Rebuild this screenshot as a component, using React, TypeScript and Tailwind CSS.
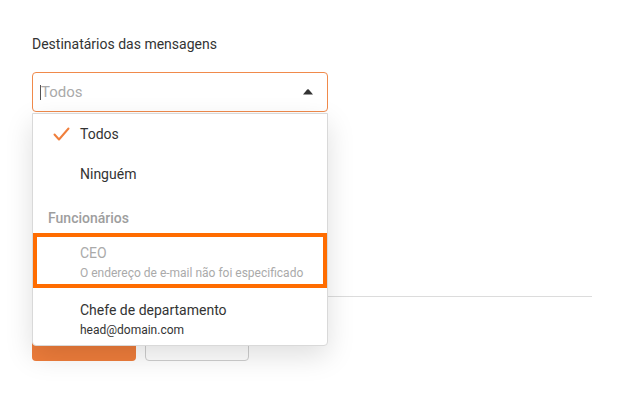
export default function App() {
  return (
    <div className="w-[624px] h-[393px] bg-white pt-[34px] px-8 font-['Roboto',sans-serif] overflow-hidden">
      <div className="text-[14px] leading-5 text-[#333]">Destinatários das mensagens</div>

      <div className="relative mt-[18px] w-[296px]">
        <div className="h-10 flex items-center border border-[#f08a4b] rounded-[4px] pl-[7px] pr-[14px]">
          <span className="w-px h-[15px] bg-[#555]" />
          <span className="flex-1 text-[15px] text-[#aaa]">Todos</span>
          <svg width="10" height="6" viewBox="0 0 10 6">
            <path d="M0 5.5 L4.2 0.6 Q5 -0.2 5.8 0.6 L10 5.5 Z" fill="#333" />
          </svg>
        </div>

        <div className="absolute left-0 top-full mt-px w-[296px] bg-white border border-[#d9d9d9] rounded-b-[4px] shadow-[0_10px_28px_rgba(0,0,0,0.13)] z-10">
          <div className="h-10 flex items-center text-[14px] text-[#333]">
            <span className="w-[47px] flex justify-end pr-[10px]">
              <svg width="17" height="14" viewBox="0 0 17 14" fill="none">
                <polyline points="1.5,7.5 6,12.5 15.5,1.5" stroke="#f07f3c" strokeWidth="2" strokeLinecap="round" strokeLinejoin="round" />
              </svg>
            </span>
            Todos
          </div>
          <div className="h-10 flex items-center pl-[47px] text-[14px] text-[#333]">Ninguém</div>
          <div className="h-[39px] pt-[14px] pl-[15px] text-[14px] leading-5 font-medium text-[#9e9e9e]">Funcionários</div>
          <div className="h-[55px] border-4 border-[#ff6c00] pl-[43px] pt-[6px]">
            <div className="text-[14px] leading-5 text-[#aaa]">CEO</div>
            <div className="mt-[2px] text-[12px] leading-4 text-[#aaa]">O endereço de e-mail não foi especificado</div>
          </div>
          <div className="pl-[47px] pt-3 pb-[7px]">
            <div className="text-[14px] leading-5 text-[#333]">Chefe de departamento</div>
            <div className="mt-[2px] text-[12px] leading-4 text-[#333]">head@domain.com</div>
          </div>
        </div>
      </div>

      <div className="mt-[184px] border-t border-[#dcdcdc]" />

      <div className="mt-6 flex gap-[9px]">
        <button className="w-[104px] h-10 rounded-[4px] bg-[#ef7d3b] text-white text-[14px]">Salvar</button>
        <button className="w-[104px] h-10 rounded-[4px] border border-[#cfcfcf] bg-white text-[#555] text-[14px]">Cancelar</button>
      </div>
    </div>
  );
}
